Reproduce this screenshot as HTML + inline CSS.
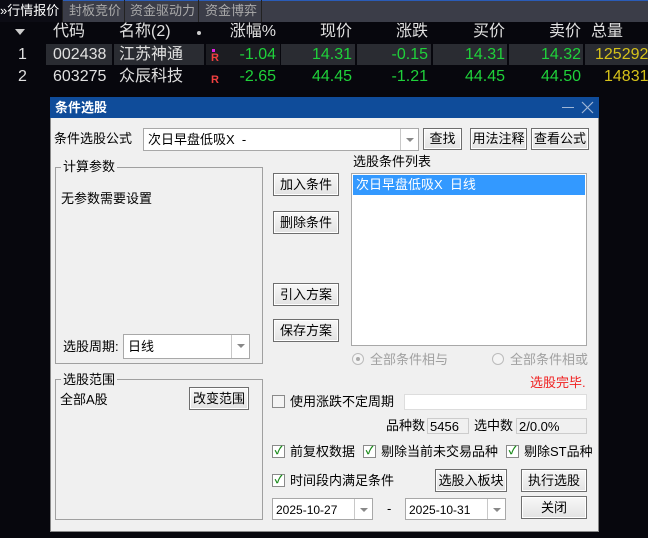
<!DOCTYPE html>
<html><head><meta charset="utf-8"><style>
*{margin:0;padding:0;box-sizing:border-box}
body{width:648px;height:538px;background:#07070d;position:relative;overflow:hidden;font-family:"Liberation Sans","Noto Sans CJK SC",sans-serif}
.a{position:absolute;white-space:nowrap}
.t{font-size:16px;color:#e0e0e0;line-height:22px}
.r{width:100px;text-align:right}
.g{color:#1fd13a}.y{color:#d6c21a}
.d{font-size:13px;color:#000;line-height:16px}
.btn{position:absolute;border:1px solid #6e6e6e;background:linear-gradient(#f8f8f8,#e2e2e2);font-size:13px;text-align:center;color:#000;box-shadow:inset 0 0 0 1px #fff}
.box{position:absolute;background:#fff;border:1px solid #a8a8a8}
.grp{position:absolute;border:1px solid #a0a0a0}
.leg{position:absolute;background:#f0f0f0;font-size:13px;padding:0 2px;line-height:14px}
.arr{position:absolute;right:0;top:0;bottom:0;width:18px;border-left:1px solid #c8c8c8}
.arr:after{content:"";position:absolute;left:5px;top:9px;border:4px solid transparent;border-top:4px solid #888}
.cb{position:absolute;width:13px;height:13px;border:1px solid #8a8a8a;background:#fff;font-size:11px;color:#1a8a1a;line-height:11px;text-align:center;font-weight:bold}
.cell{position:absolute;background:#2a2c32;height:21px;top:44px}
.tab{position:absolute;top:3px;font-size:13px;color:#aaa;line-height:16px}
.sep{position:absolute;top:0;width:1px;height:22px;background:#222}
</style></head><body>
<div class="a" style="left:0;top:0;width:648px;height:22px;background:#3b3d48"></div>
<div class="a" style="left:62px;top:0;width:586px;height:1px;background:#2a5cb8"></div>
<div class="a" style="left:0;top:0;width:62px;height:22px;background:#0c0c14"></div>
<div class="sep" style="left:62px"></div>
<div class="sep" style="left:124px"></div>
<div class="sep" style="left:198px"></div>
<div class="sep" style="left:261px"></div>
<div class="tab" style="left:0;color:#fff">»行情报价</div>
<div class="tab" style="left:69px">封板竞价</div>
<div class="tab" style="left:130px">资金驱动力</div>
<div class="tab" style="left:205px">资金博弈</div>
<div class="a" style="left:15px;top:29px;border:5px solid transparent;border-top:6px solid #ccc"></div>
<div class="a t" style="left:53px;top:21px">代码</div>
<div class="a t" style="left:119px;top:21px">名称(2)</div>
<div class="a" style="left:197px;top:31px;width:4px;height:4px;border-radius:2px;background:#ccc"></div>
<div class="a t r" style="left:176px;top:21px">涨幅%</div>
<div class="a t r" style="left:252px;top:21px">现价</div>
<div class="a t r" style="left:328px;top:21px">涨跌</div>
<div class="a t r" style="left:405px;top:21px">买价</div>
<div class="a t r" style="left:481px;top:21px">卖价</div>
<div class="a t" style="left:591px;top:21px">总量</div>
<div class="cell" style="left:46px;width:66px"></div>
<div class="cell" style="left:114px;width:90px"></div>
<div class="cell" style="left:206px;width:74px;background:#1c1d22"></div>
<div class="cell" style="left:281px;width:74px"></div>
<div class="cell" style="left:357px;width:74px"></div>
<div class="cell" style="left:433px;width:74px"></div>
<div class="cell" style="left:509px;width:74px"></div>
<div class="cell" style="left:585px;width:63px"></div>
<div class="a t" style="left:18px;top:44px">1</div>
<div class="a t" style="left:53px;top:44px">002438</div>
<div class="a t" style="left:119px;top:44px">江苏神通</div>
<div class="a" style="left:212px;top:49px;width:3px;height:3px;background:#e020e0"></div>
<div class="a" style="left:211px;top:52px;font-size:11px;font-weight:bold;color:#f04040">R</div>
<div class="a t g r" style="left:176px;top:44px">-1.04</div>
<div class="a t g r" style="left:252px;top:44px">14.31</div>
<div class="a t g r" style="left:328px;top:44px">-0.15</div>
<div class="a t g r" style="left:405px;top:44px">14.31</div>
<div class="a t g r" style="left:481px;top:44px">14.32</div>
<div class="a t y" style="left:595px;top:44px">125292</div>
<div class="a t" style="left:18px;top:66px">2</div>
<div class="a t" style="left:53px;top:66px">603275</div>
<div class="a t" style="left:119px;top:66px">众辰科技</div>
<div class="a" style="left:211px;top:74px;font-size:11px;font-weight:bold;color:#f04040">R</div>
<div class="a t g r" style="left:176px;top:66px">-2.65</div>
<div class="a t g r" style="left:252px;top:66px">44.45</div>
<div class="a t g r" style="left:328px;top:66px">-1.21</div>
<div class="a t g r" style="left:405px;top:66px">44.45</div>
<div class="a t g r" style="left:481px;top:66px">44.50</div>
<div class="a t y" style="left:604px;top:66px">14831</div>
<!-- dialog -->
<div class="a" style="left:50px;top:97px;width:549px;height:435px;background:#f0f0f0;border:1px solid #888"></div>
<div class="a" style="left:50px;top:97px;width:549px;height:21px;background:#0f4c9a"></div>
<div class="a" style="left:55px;top:100px;font-size:13px;font-weight:bold;color:#fff;line-height:16px">条件选股</div>
<div class="a" style="left:562px;top:107px;width:12px;height:1px;background:#9fb6d6"></div>
<svg class="a" style="left:581px;top:101px" width="13" height="13"><path d="M1 1L12 12M12 1L1 12" stroke="#9fb6d6" stroke-width="1.2"/></svg>
<div class="a d" style="left:54px;top:131px">条件选股公式</div>
<div class="box" style="left:143px;top:128px;width:276px;height:23px"><div class="a d" style="left:4px;top:3px">次日早盘低吸X&nbsp; -</div><div class="arr"></div></div>
<div class="btn" style="left:423px;top:128px;width:39px;height:22px;line-height:20px">查找</div>
<div class="btn" style="left:470px;top:128px;width:57px;height:22px;line-height:20px">用法注释</div>
<div class="btn" style="left:531px;top:128px;width:58px;height:22px;line-height:20px">查看公式</div>
<div class="grp" style="left:55px;top:167px;width:208px;height:197px"></div>
<div class="leg" style="left:61px;top:160px">计算参数</div>
<div class="a d" style="left:61px;top:191px">无参数需要设置</div>
<div class="a d" style="left:63px;top:339px">选股周期:</div>
<div class="box" style="left:123px;top:334px;width:127px;height:25px"><div class="a d" style="left:4px;top:4px">日线</div><div class="arr"></div></div>
<div class="btn" style="left:273px;top:173px;width:66px;height:23px;line-height:21px">加入条件</div>
<div class="btn" style="left:273px;top:211px;width:66px;height:23px;line-height:21px">删除条件</div>
<div class="btn" style="left:273px;top:283px;width:66px;height:23px;line-height:21px">引入方案</div>
<div class="btn" style="left:273px;top:319px;width:66px;height:23px;line-height:21px">保存方案</div>
<div class="a d" style="left:353px;top:154px">选股条件列表</div>
<div class="box" style="left:351px;top:173px;width:236px;height:173px"><div class="a" style="left:1px;top:1px;width:232px;height:20px;background:#3399ff;color:#fff;font-size:13px;line-height:20px;padding-left:3px">次日早盘低吸X&nbsp; 日线</div></div>
<div class="a" style="left:352px;top:353px;width:12px;height:12px;border-radius:6px;border:1px solid #bbb;background:#f4f4f4"><div class="a" style="left:3px;top:3px;width:4px;height:4px;border-radius:2px;background:#aaa"></div></div>
<div class="a d" style="left:370px;top:352px;color:#a0a0a0">全部条件相与</div>
<div class="a" style="left:492px;top:353px;width:12px;height:12px;border-radius:6px;border:1px solid #bbb;background:#f4f4f4"></div>
<div class="a d" style="left:510px;top:352px;color:#a0a0a0">全部条件相或</div>
<div class="a d" style="left:530px;top:375px;color:#f02020">选股完毕.</div>
<div class="grp" style="left:55px;top:379px;width:208px;height:141px"></div>
<div class="leg" style="left:61px;top:373px">选股范围</div>
<div class="a d" style="left:60px;top:392px">全部A股</div>
<div class="btn" style="left:189px;top:387px;width:60px;height:23px;line-height:21px">改变范围</div>
<div class="cb" style="left:272px;top:395px;background:#f4f4f4"></div>
<div class="a d" style="left:290px;top:394px">使用涨跌不定周期</div>
<div class="a" style="left:404px;top:394px;width:183px;height:16px;background:#fff;border:1px solid #ddd"></div>
<div class="a d" style="left:386px;top:418px">品种数</div>
<div class="a d" style="left:427px;top:418px;width:42px;height:16px;border:1px solid #ccc;padding-left:2px">5456</div>
<div class="a d" style="left:474px;top:418px">选中数</div>
<div class="a d" style="left:516px;top:418px;width:71px;height:16px;border:1px solid #ccc;padding-left:2px">2/0.0%</div>
<div class="cb" style="left:272px;top:445px">✓</div><div class="a d" style="left:290px;top:444px">前复权数据</div>
<div class="cb" style="left:363px;top:445px">✓</div><div class="a d" style="left:381px;top:444px">剔除当前未交易品种</div>
<div class="cb" style="left:506px;top:445px">✓</div><div class="a d" style="left:524px;top:444px">剔除ST品种</div>
<div class="cb" style="left:272px;top:474px">✓</div><div class="a d" style="left:290px;top:473px">时间段内满足条件</div>
<div class="btn" style="left:435px;top:469px;width:72px;height:23px;line-height:21px">选股入板块</div>
<div class="btn" style="left:521px;top:469px;width:66px;height:23px;line-height:21px">执行选股</div>
<div class="box" style="left:272px;top:498px;width:101px;height:22px"><div class="a d" style="left:3px;top:3px;font-size:12px">2025-10-27</div><div class="arr"></div></div>
<div class="a d" style="left:387px;top:501px">-</div>
<div class="box" style="left:405px;top:498px;width:101px;height:22px"><div class="a d" style="left:3px;top:3px;font-size:12px">2025-10-31</div><div class="arr"></div></div>
<div class="btn" style="left:521px;top:496px;width:66px;height:23px;line-height:21px">关闭</div>
</body></html>
